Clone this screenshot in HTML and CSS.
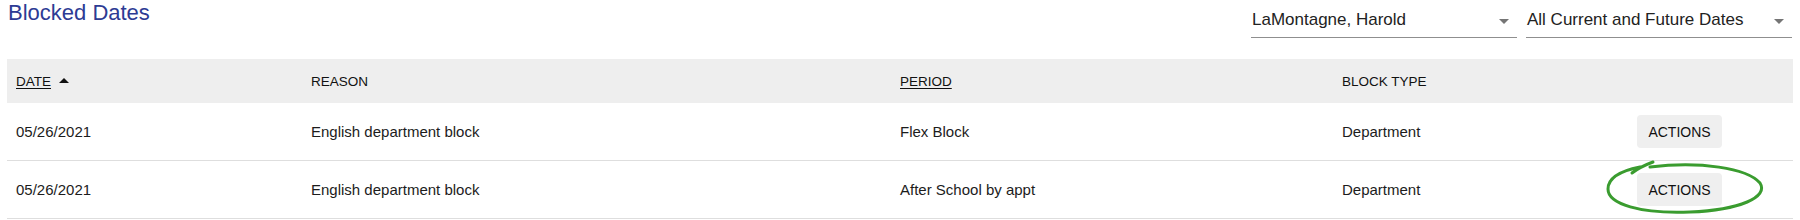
FILE: index.html
```html
<!DOCTYPE html>
<html lang="en">
<head>
<meta charset="utf-8">
<title>Blocked Dates</title>
<link rel="stylesheet" href="styles.css">
</head>
<body>
<div class="page">
  <header class="topbar">
    <h1 class="title">Blocked Dates</h1>
    <div class="filters">
      <div class="select">
        <span class="select-value">LaMontagne, Harold</span>
        <span class="select-arrow"></span>
      </div>
      <div class="select">
        <span class="select-value">All Current and Future Dates</span>
        <span class="select-arrow"></span>
      </div>
    </div>
  </header>

  <div class="table">
    <div class="row head">
      <div class="cell"><span class="sortable">Date</span><span class="sort-up"></span></div>
      <div class="cell">Reason</div>
      <div class="cell"><span class="sortable">Period</span></div>
      <div class="cell">Block Type</div>
      <div class="cell"></div>
    </div>
    <div class="row">
      <div class="cell">05/26/2021</div>
      <div class="cell">English department block</div>
      <div class="cell">Flex Block</div>
      <div class="cell">Department</div>
      <div class="cell"><button class="btn">Actions</button></div>
    </div>
    <div class="row">
      <div class="cell">05/26/2021</div>
      <div class="cell">English department block</div>
      <div class="cell">After School by appt</div>
      <div class="cell">Department</div>
      <div class="cell"><button class="btn">Actions</button></div>
    </div>
  </div>

  <svg class="annotation" width="1800" height="220" viewBox="0 0 1800 220" xmlns="http://www.w3.org/2000/svg">
    <path d="M1653,162 C1645,165 1637,169 1632,173" />
    <path d="M1650,167 C1700,161 1747,168 1760,183 C1769,197 1740,210 1690,212 C1640,214 1608,204 1608,189 C1608,178 1620,171 1640,167" />
  </svg>
</div>
</body>
</html>
```

FILE: styles.css
```css
* { box-sizing: border-box; }

html, body {
  margin: 0;
  padding: 0;
  background: #ffffff;
}

body {
  font-family: "Liberation Sans", Arial, Helvetica, sans-serif;
  color: #1a1a1a;
  width: 1800px;
  height: 220px;
  overflow: hidden;
}

.page {
  position: relative;
  width: 1800px;
  height: 220px;
}

.topbar {
  display: flex;
  justify-content: space-between;
  align-items: flex-start;
  height: 59px;
  padding: 0 8px 0 8px;
}

.title {
  margin: 0;
  font-size: 22px;
  line-height: 26px;
  font-weight: 400;
  color: #2d3b94;
}

.filters {
  display: flex;
  gap: 9px;
}

.select {
  width: 266px;
  display: flex;
  align-items: center;
  justify-content: space-between;
  padding: 10px 8px 7px 1px;
  border-bottom: 1px solid #8f8f8f;
}

.select-value {
  font-size: 17px;
  line-height: 20px;
  color: #222;
}

.select-arrow {
  width: 0;
  height: 0;
  border-left: 5px solid transparent;
  border-right: 5px solid transparent;
  border-top: 5px solid #757575;
  margin-top: 2px;
}

.table {
  margin: 0 7px;
}

.row {
  display: grid;
  grid-template-columns: 295px 589px 442px 295px 1fr;
  align-items: center;
  height: 58px;
  border-bottom: 1px solid #dedede;
}

.row.head {
  height: 44px;
  background: #eeeeee;
  border-bottom: none;
}

.cell {
  padding-left: 9px;
  font-size: 15px;
  color: #1c1c1c;
  display: flex;
  align-items: center;
}

.head .cell {
  font-size: 13.5px;
  text-transform: uppercase;
  color: #111;
}

.sortable {
  text-decoration: underline;
  text-underline-offset: 2px;
}

.sort-up {
  width: 0;
  height: 0;
  border-left: 5px solid transparent;
  border-right: 5px solid transparent;
  border-bottom: 5px solid #111;
  margin-left: 8px;
  margin-top: -1px;
}

.btn {
  width: 85px;
  height: 33px;
  border: none;
  border-radius: 4px;
  background: #efefef;
  font-family: "Liberation Sans", Arial, Helvetica, sans-serif;
  font-size: 14px;
  text-transform: uppercase;
  color: #111;
  padding: 0;
}

.annotation {
  position: absolute;
  left: 0;
  top: 0;
  pointer-events: none;
  fill: none;
  stroke: #3a9c2f;
  stroke-width: 3;
  stroke-linecap: round;
}
```
